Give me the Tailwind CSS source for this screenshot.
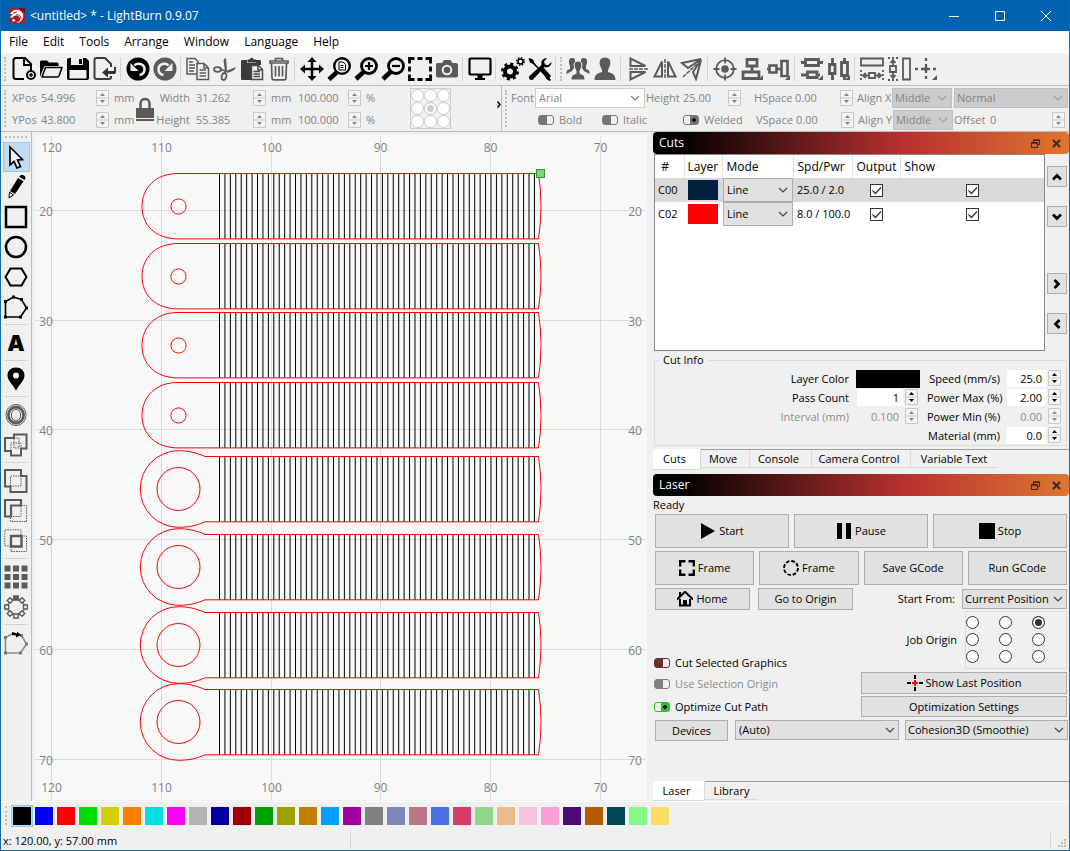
<!DOCTYPE html>
<html lang="en">
<head>
  <meta charset="UTF-8" />
  <meta name="viewport" content="width=device-width, initial-scale=1.0" />
  <title>LightBurn 0.9.07</title>
  <script src="https://cdn.jsdelivr.net/npm/@tailwindcss/browser@4"></script>
</head>
<body class="min-h-screen flex flex-col bg-[#f0f0f0] border-x border-b border-[#0f6ab4] font-['Open_Sans',sans-serif] text-[11px] leading-4 text-black">

  <!-- shared symbols -->
  <svg class="hidden">
    <symbol id="spin" viewBox="0 0 13 16">
      <path d="M.5 .5h12v15h-12zM.5 8h12" fill="#f4f4f4" stroke="#c8c8c8" />
      <path d="M6.5 3L9 6H4zM6.5 13L9 10H4z" fill="currentColor" />
    </symbol>
    <symbol id="chevron" viewBox="0 0 10 6"><path d="M1 1l4 4 4-4" fill="none" stroke="currentColor" stroke-width="1.2" /></symbol>
    <symbol id="tick" viewBox="0 0 13 13"><path d="M2.5 6.5l3 3 5.500-6" fill="none" stroke="#333" stroke-width="1.3" /></symbol>
    <symbol id="arrow" viewBox="0 0 10 10"><path d="M1 7.500L5 3.500 9 7.500" fill="none" stroke="#000" stroke-width="2.800" /></symbol>
    <symbol id="float" viewBox="0 0 9 9"><path d="M2.500 3V1h6v4.500h-2M.5 3.500h6v5h-6z" fill="none" stroke="#3a2a22" /><path d="M.5 4h6M2.500 1.300h6" stroke="#3a2a22" stroke-width="1.500" /></symbol>
    <symbol id="close" viewBox="0 0 9 9"><path d="M1 1l7 7M8 1L1 8" stroke="#3a2a22" stroke-width="2" /></symbol>
  </svg>

  <!-- title bar -->
  <header class="h-[31px] flex items-center bg-[#0063b1] text-white text-xs pl-2">
    <svg class="size-4 mr-[5px]" viewBox="0 0 16 16">
      <rect width="16" height="16" fill="#a8202c" />
      <path d="M0 0h16v5L9 0z" fill="#6e1018" />
      <path d="M1 6C3 3 6 1 9 2c4 1 6 4 5 8-1 3-4 5-7 5 3-1 5-3 4-5-1-3-4-3-6-2L3 10 1 9l3-3z" fill="#fff" />
      <path d="M4 5l4-1M7 7c3-1 5 1 5 4" stroke="#a8202c" fill="none" />
      <path d="M3 11l4 1-3 2z" fill="#fff" />
    </svg>
    <span class="flex-1">&lt;untitled&gt; * - LightBurn 0.9.07</span>
    <button class="w-[46px] h-full grid place-items-center" aria-label="Minimize"><svg class="size-[10px]"><path d="M0 5.500h10" stroke="#fff" /></svg></button>
    <button class="w-[46px] h-full grid place-items-center" aria-label="Maximize"><svg class="size-[10px]"><path d="M.5 .5h9v9h-9z" fill="none" stroke="#fff" /></svg></button>
    <button class="w-[46px] h-full grid place-items-center" aria-label="Close"><svg class="size-[10px]"><path d="M0 0l10 10M10 0L0 10" stroke="#fff" /></svg></button>
  </header>

  <!-- menu -->
  <nav class="h-[22px] flex items-center gap-[15px] bg-white text-xs pl-2">
    <a href="#">File</a><a href="#">Edit</a><a href="#">Tools</a><a href="#">Arrange</a><a href="#">Window</a><a href="#">Language</a><a href="#">Help</a>
  </nav>

  <!-- main toolbar -->
  <div class="h-[33px] flex items-stretch border-b border-[#bcbcbc] [&_button]:w-[27px] [&_button]:grid [&_button]:place-items-center [&_button_svg]:size-6 [&_i]:w-px [&_i]:bg-[#d4d4d4] [&_i]:my-1 [&_i]:ml-[2px] [&_i]:mr-[3px]">
    <span class="w-[3px] ml-[3px] mr-[3px] my-1 border-l-2 border-dotted border-[#bdbdbd]"></span>
    <button aria-label="New"><svg viewBox="0 0 24 24" fill="none" stroke="#000" stroke-width="2"><path d="M12 22H4c-1.500 0-2.500-1-2.500-2.500v-16C1.500 2 2.500 1 4 1h9l6 6v6M12 1.500V8h6" /><circle cx="19" cy="18" r="4" /><path d="M19 16v4M17 18h4" stroke-width="1.500" /></svg></button>
    <button aria-label="Open"><svg viewBox="0 0 24 24"><path d="M1 20V5c0-1 .5-1.500 1.500-1.500H8l2 2h8c1 0 1.500.5 1.500 1.500v2H7C5.500 9 5 9.500 4.500 11z" /><path d="M3 20L6.500 10.500h16.500L20 19c-.3.700-.8 1-1.500 1z" fill="#f0f0f0" stroke="#000" stroke-width="1.600" stroke-linejoin="round" /></svg></button>
    <button aria-label="Save"><svg viewBox="0 0 24 24"><path d="M1 3c0-1.300.7-2 2-2h17l3 3v17c0 1.300-.7 2-2 2H3c-1.300 0-2-.7-2-2z" /><path d="M5 1h12v7H5zM3.500 13h17v8.500h-17z" fill="#f0f0f0" /><path d="M13 2h3v5h-3z" /></svg></button>
    <button aria-label="Export"><svg viewBox="0 0 24 24" fill="none" stroke="#3c3c3c" stroke-width="2"><path d="M18 10V7l-6-6H3.500C2.500 1 1.500 2 1.500 3v17c0 1 1 2 2 2H16c1 0 2-.5 2-2v-1" /><path d="M9 15.500l6-5v3.500h6v-4h2v5c0 1.500-.8 2-2 2h-6v3.500z" fill="#333" stroke="none" /></svg></button>
    <i></i>
    <button aria-label="Undo"><svg viewBox="0 0 24 24"><circle cx="12" cy="12" r="11.500" /><path d="M8.500 8.500C11 5.500 18.500 6 18.500 12.500c0 3-2 5-5 5.500" fill="none" stroke="#f0f0f0" stroke-width="2.500" /><path d="M4.500 6v8h8z" fill="#f0f0f0" /></svg></button>
    <button aria-label="Redo"><svg viewBox="0 0 24 24"><circle cx="12" cy="12" r="11.500" fill="#5a5a5a" /><path d="M15.500 8.500C13 5.500 5.500 6 5.500 12.500c0 3 2 5 5 5.500" fill="none" stroke="#f0f0f0" stroke-width="2.500" /><path d="M19.500 6v8h-8z" fill="#f0f0f0" /></svg></button>
    <i></i>
    <button aria-label="Copy"><svg viewBox="0 0 24 24" fill="#f0f0f0" stroke="#5a5a5a" stroke-width="1.500"><path d="M1 1.500h8l3 3V17H1z" /><path d="M3 5h4M3 8h6M3 11h6M3 14h5" /><path d="M11 6.500h7l4.500 4.500v11.500H11zM18 7v4h4" /><path d="M13.500 13h6.500M13.500 16h6.500M13.500 19h6.500" /></svg></button>
    <button aria-label="Cut"><svg viewBox="0 0 24 24" fill="none" stroke="#5a5a5a" stroke-width="1.800"><ellipse cx="4.500" cy="12.500" rx="3.500" ry="2.300" /><ellipse cx="11" cy="19.500" rx="2.300" ry="3.500" transform="rotate(15 11 19.500)" /><path d="M8 12.500l4.500 1.500-1 2.500" /><path d="M12 14L10.500 3.500C11 1.500 13 1 13 1l1 12zM13 14l10-4c-1 3-3 4-9 6z" fill="#5a5a5a" stroke="none" /></svg></button>
    <button aria-label="Paste"><svg viewBox="0 0 24 24"><path d="M1 4.500C1 3.500 1.500 3 2.500 3H7v3h9V3h3.500c1 0 1.500.5 1.500 1.500V8H11v15H2.500C1.500 23 1 22.500 1 21.500z" fill="#3a3a3a" /><path d="M7.500 5.500v-3H10c0-2.500 3.500-2.500 3.500 0h2.500v3z" fill="#3a3a3a" /><path d="M11.500 8.500h7l4 4v10h-11zM18 9v4h4" fill="#f0f0f0" stroke="#4a4a4a" stroke-width="1.500" /><path d="M13.500 14.500h6.500M13.500 17h6.500M13.500 19.500h6.500" stroke="#4a4a4a" stroke-width="1.500" /></svg></button>
    <button aria-label="Delete"><svg viewBox="0 0 24 24" fill="none" stroke="#5a5a5a" stroke-width="1.700"><path d="M3.500 6h17M3 4h18v2H3zM8.500 4V1.500h7V4M4.500 6l.5 15c0 1 .8 1.800 2 1.800h10c1.200 0 2-.8 2-1.800l.5-15M8.500 9v10.500M12 9v10.500M15.500 9v10.500" /></svg></button>
    <i></i>
    <button aria-label="Pan"><svg viewBox="0 0 24 24"><path d="M12 2v20M2 12h20" stroke="#000" stroke-width="2.500" /><path d="M12 0l4.500 5h-9zM12 24l4.500-5h-9zM0 12l5-4.500v9zM24 12l-5-4.500v9z" /></svg></button>
    <button aria-label="Zoom to page"><svg viewBox="0 0 24 24" fill="none" stroke="#000"><circle cx="15" cy="9" r="7.800" stroke-width="2.400" /><path d="M9.500 15.500L2 22.500" stroke-width="4.500" /><path d="M12 5h4l2.500 2.500V13H12zM13.500 8.500h3M13.500 10.500h3" /></svg></button>
    <button aria-label="Zoom in"><svg viewBox="0 0 24 24" fill="none" stroke="#000"><circle cx="15" cy="9" r="7.500" stroke-width="2.800" /><path d="M9.500 15L2 22" stroke-width="4.500" /><path d="M11 9h8M15 5v8" stroke-width="2.200" /></svg></button>
    <button aria-label="Zoom out"><svg viewBox="0 0 24 24" fill="none" stroke="#000"><circle cx="15" cy="9" r="7.500" stroke-width="2.800" /><path d="M9.500 15L2 22" stroke-width="4.500" /><path d="M11 9h8" stroke-width="2.200" /></svg></button>
    <button aria-label="Frame selection"><svg viewBox="0 0 24 24" fill="none" stroke="#000" stroke-width="2.800"><path d="M1.500 6.500V1.500H6.500M9.500 1.500h5M17.500 1.500h5V6.500M22.500 9.500v5M22.500 17.500v5H17.500M14.500 22.500h-5M6.500 22.500H1.500V17.500M1.500 14.500v-5" /></svg></button>
    <button aria-label="Camera"><svg viewBox="0 0 24 24"><path d="M1 8c0-1.500.7-2 2-2h4l2-3h6.500l2 3H21c1.300 0 2 .7 2 2v10.500c0 1.300-.7 2-2 2H3c-1.300 0-2-.7-2-2z" fill="#5a5a5a" /><circle cx="12" cy="13" r="4.300" fill="#5a5a5a" stroke="#f0f0f0" stroke-width="2" /></svg></button>
    <i></i>
    <button aria-label="Preview"><svg viewBox="0 0 24 24"><path d="M2.500 1.500h19c.6 0 1 .4 1 1v14c0 .6-.4 1-1 1h-19c-.6 0-1-.4-1-1v-14c0-.6.4-1 1-1z" fill="none" stroke="#000" stroke-width="2.200" /><path d="M9.500 18h5v3h2.500v2H7v-2h2.500z" /></svg></button>
    <i></i>
    <button aria-label="Settings"><svg viewBox="0 0 24 24" fill="none" stroke="#000"><circle cx="9" cy="14.500" r="5" stroke-width="4" /><circle cx="9" cy="14.500" r="7.500" stroke-width="3" stroke-dasharray="2.950" /><circle cx="19.500" cy="4.500" r="2.500" stroke-width="1.500" /><circle cx="19.500" cy="4.500" r="3.800" stroke-width="1.400" stroke-dasharray="1.490" /></svg></button>
    <button aria-label="Device settings"><svg viewBox="0 0 24 24"><path d="M1.500 1L5 2.500 6.500 6 18 18.500l3 1.500 2 3-1.500 1-3-2-1.500-3L5 7 2 5.500.5 2z" /><path d="M13 13l3-2 7 8-3.500 4z" /><path d="M23.500 5c0 4-3.500 6-7 5L5.500 22c-1 1.300-2.700 1.300-3.800.2s-1-2.700.3-3.700L13.500 8c-1-4 1.500-7 5.500-7l-3 3.500 1 3 3 .8z" /></svg></button>
    <i></i>
    <span class="w-[3px] ml-px mr-px my-1 border-l-2 border-dotted border-[#bdbdbd]"></span>
    <button aria-label="Group"><svg viewBox="0 0 24 24" fill="#5a5a5a"><path d="M6 1c3 0 3.500 2 3 4.500L8 9v2l-2 3-5.500 3c0-3 0-4 3.500-5V9C2.500 6 2 1 6 1zM18 1c-3 0-3.500 2-3 4.500L16 9v2l2 3 5.500 3c0-3 0-4-3.500-5V9c1.500-3 2-8-2-8z" /><path d="M12 4c3.500 0 4.500 3 3.500 6.500L14 14v2.500c3 1 5 1.500 5 6.500H5c0-5 2-5.500 5-6.500V14l-1.500-3.500C7.500 7 8.500 4 12 4z" stroke="#f0f0f0" /></svg></button>
    <button aria-label="Ungroup"><svg viewBox="0 0 24 24" fill="#5a5a5a"><path d="M12 .5c5 0 6 4 5 8l-2 4.500v2c4 1.500 7.500 2 7.500 8h-21c0-6 3.500-6.500 7.500-8v-2L7 8.500c-1-4 0-8 5-8z" /></svg></button>
    <i></i>
    <button aria-label="Flip vertical"><svg viewBox="0 0 24 24" fill="none" stroke="#5a5a5a" stroke-width="2"><path d="M4.500 1.500v7.500h15zM4.500 22.500V15h15z" /><path d="M3 12h19" stroke-width="1.500" stroke-dasharray="4 1" /></svg></button>
    <button aria-label="Flip horizontal"><svg viewBox="0 0 24 24" fill="none" stroke="#5a5a5a" stroke-width="2"><path d="M1.500 19.500H9v-15zM22.500 19.500H15v-15z" /><path d="M12 2v20" stroke-width="1.500" stroke-dasharray="4 1" /></svg></button>
    <button aria-label="Mirror across line"><svg viewBox="0 0 24 24" fill="none" stroke="#5a5a5a" stroke-width="2"><path d="M2 6l19-4L8 11zM16 22l5-19-8 12z" /><path d="M3 20L20 4" stroke-width="1.500" stroke-dasharray="4 1" /></svg></button>
    <i></i>
    <button aria-label="Center"><svg viewBox="0 0 24 24" fill="none" stroke="#5a5a5a" stroke-width="1.800"><circle cx="12" cy="12" r="8.800" /><path d="M12 .5v6M12 17.500v6M.5 12h6M17.500 12h6" /><circle cx="12" cy="12" r="3.800" fill="#5a5a5a" stroke="none" /></svg></button>
    <button aria-label="Align vertical"><svg viewBox="0 0 24 24" fill="none" stroke="#5a5a5a" stroke-width="2.800"><path d="M7 2.500h10v6.500H7zM3 15h16v6.500H3zM12 9v6" /><path d="M23 18v5h-5z" fill="#5a5a5a" stroke="none" /></svg></button>
    <button aria-label="Align horizontal"><svg viewBox="0 0 24 24" fill="none" stroke="#5a5a5a" stroke-width="2.600"><path d="M2.500 8.500h7v7h-7zM14.500 4h6v15h-6zM0 12h2.500M9.500 12h5" /><path d="M23 18v5h-5z" fill="#5a5a5a" stroke="none" /></svg></button>
    <i></i>
    <button aria-label="Distribute vertical"><svg viewBox="0 0 24 24" fill="none" stroke="#5a5a5a" stroke-width="2.800"><path d="M5.500 2.500h13v6h-13zM7.500 15h9.500v5.500H7.500zM1 5.500h4.500M18.500 5.500H23M1 18h6.500M17 18h3" /><path d="M23 18v5h-5z" fill="#5a5a5a" stroke="none" /></svg></button>
    <button aria-label="Distribute horizontal"><svg viewBox="0 0 24 24" fill="none" stroke="#5a5a5a" stroke-width="2.800"><path d="M2.500 7.500h5.500v9H2.500zM14.500 5.500h6v13h-6zM5.500 1v6.500M5.500 16.500V23M17.500 1v4.500M17.500 18.500V23" /><path d="M23 18v5h-5z" fill="#5a5a5a" stroke="none" /></svg></button>
    <i></i>
    <button aria-label="Move together horizontal"><svg viewBox="0 0 24 24" fill="none" stroke="#5a5a5a" stroke-width="1.800"><path d="M1 1.500h22v7H1z" /><path d="M1 13v10M23 13v10" stroke-dasharray="2 2" /><path d="M9 16h6v5H9zM3 18.500h6M15 18.500h6M6 16l-3 2.500L6 21M18 16l3 2.500-3 2.500" /></svg></button>
    <button aria-label="Move together vertical"><svg viewBox="0 0 24 24" fill="none" stroke="#5a5a5a" stroke-width="1.800"><path d="M16 1.500h7v21h-7z" /><path d="M1 1h10M1 23h10" stroke-dasharray="2 2" /><path d="M3 9h6v6H3zM6 3v6M6 15v6M3.500 6L6 3l2.500 3M3.500 18L6 21l2.500-3" /></svg></button>
    <button aria-label="Move to position"><svg viewBox="0 0 24 24" fill="none" stroke="#5a5a5a" stroke-width="2"><path d="M12 1v3M12 7v9M12 19v3M1 12h3M7 12h9M19 12h3" stroke-width="2.300" /><path d="M23 18v5h-5z" fill="#5a5a5a" stroke="none" /></svg></button>
  </div>

  <!-- numeric edits + text options -->
  <div class="h-[46px] flex border-b border-[#bcbcbc] text-[#838383] [&_input]:min-w-0 [&_svg.spin]:w-[13px] [&_svg.spin]:h-4 [&_svg.spin]:shrink-0">
    <span class="w-[3px] ml-[3px] mr-[5px] my-1 shrink-0 border-l-2 border-dotted border-[#bdbdbd]"></span>
    <div class="w-[490px] shrink-0 flex border-r border-[#bcbcbc]">
      <div class="grid grid-cols-[29px_55px_18px_20px] grid-rows-[22px_22px] items-center pt-px">
        <label for="xpos">XPos</label><input id="xpos" value="54.996" /><svg class="spin"><use href="#spin" /></svg><span>mm</span>
        <label for="ypos">YPos</label><input id="ypos" value="43.800" /><svg class="spin"><use href="#spin" /></svg><span>mm</span>
      </div>
      <button class="w-[22px] grid place-items-center" aria-label="Lock aspect ratio">
        <svg class="w-[18px] h-6" viewBox="0 0 18 24" fill="#5a5a5a"><path d="M4.500 11V6.500c0-6 9-6 9 0V11" fill="none" stroke="#5a5a5a" stroke-width="2.500" /><path d="M0 11h18v10H0zM0 22h18v2H0z" /></svg>
      </button>
      <div class="grid grid-cols-[34px_6px_57px_18px_27px_50px_18px_12px] grid-rows-[22px_22px] items-center pt-px">
        <label for="wid" class="text-right">Width</label><span></span><input id="wid" value="31.262" /><svg class="spin"><use href="#spin" /></svg><span>mm</span><input aria-label="Width percent" value="100.000" /><svg class="spin"><use href="#spin" /></svg><span>%</span>
        <label for="hei" class="text-right">Height</label><span></span><input id="hei" value="55.385" /><svg class="spin"><use href="#spin" /></svg><span>mm</span><input aria-label="Height percent" value="100.000" /><svg class="spin"><use href="#spin" /></svg><span>%</span>
      </div>
      <fieldset class="ml-8 mt-0.5 size-[41px] grid grid-cols-3 place-items-center border border-[#ccc] [&_input]:size-[13px] [&_input]:appearance-none [&_input]:rounded-full [&_input]:border [&_input]:border-[#ccc] [&_input]:bg-white [&_input:checked]:bg-[#ccc] [&_input:checked]:shadow-[inset_0_0_0_2px_white]">
        <input type="radio" name="anchor" aria-label="Top left" /><input type="radio" name="anchor" aria-label="Top" /><input type="radio" name="anchor" aria-label="Top right" />
        <input type="radio" name="anchor" aria-label="Left" /><input type="radio" name="anchor" aria-label="Center" checked /><input type="radio" name="anchor" aria-label="Right" />
        <input type="radio" name="anchor" aria-label="Bottom left" /><input type="radio" name="anchor" aria-label="Bottom" /><input type="radio" name="anchor" aria-label="Bottom right" />
      </fieldset>
      <button class="ml-auto mb-2" aria-label="More"><svg class="w-[4px] h-[7px]"><path d="M.5 .5l2.500 3-2.500 3" fill="none" stroke="#000" stroke-width="1.500" /></svg></button>
    </div>
    <span class="w-[3px] ml-[3px] mr-[3px] my-1 shrink-0 border-l-2 border-dotted border-[#bdbdbd]"></span>

    <div class="flex-1 min-w-0 flex flex-col">
      <div class="h-[23px] pt-px flex items-center">
        <label for="font" class="w-[24px]">Font</label>
        <div class="w-[110px] h-5 grid items-center border border-[#ccc] bg-white"><select id="font" class="[grid-area:1/1] appearance-none px-[3px]"><option>Arial</option></select><svg class="[grid-area:1/1] justify-self-end mr-1 w-[10px] h-[6px] pointer-events-none"><use href="#chevron" /></svg></div>
        <label for="fh" class="w-[38px] pl-px">Height</label><input id="fh" class="w-[45px]" value="25.00" /><svg class="spin"><use href="#spin" /></svg>
        <label for="hs" class="w-[41px] ml-[13px]">HSpace</label><input id="hs" class="w-[45px]" value="0.00" /><svg class="spin"><use href="#spin" /></svg>
        <label for="ax" class="w-[35px] ml-1 whitespace-nowrap">Align X</label>
        <div class="w-[60px] h-5 grid items-center border border-[#bfbfbf] bg-[#ccc]"><select id="ax" class="[grid-area:1/1] appearance-none px-[2px]"><option>Middle</option></select><svg class="[grid-area:1/1] justify-self-end mr-1 w-[10px] h-[6px] pointer-events-none text-[#a0a0a0]"><use href="#chevron" /></svg></div>
        <div class="flex-1 min-w-0 ml-[2px] mr-px h-5 grid items-center border border-[#bfbfbf] bg-[#ccc]"><select aria-label="Text mode" class="[grid-area:1/1] appearance-none px-[2px]"><option>Normal</option></select><svg class="[grid-area:1/1] justify-self-end mr-1 w-[10px] h-[6px] pointer-events-none text-[#a0a0a0]"><use href="#chevron" /></svg></div>
      </div>
      <div class="h-[22px] flex items-center">
        <label class="flex items-center gap-[5px] ml-[27px] w-[64px]"><input type="checkbox" class="appearance-none w-4 h-[10px] rounded-[3px] border border-[#777] bg-[linear-gradient(90deg,#777_55%,#f0f0f0_55%)]" />Bold</label>
        <label class="flex items-center gap-[5px] w-[81px]"><input type="checkbox" class="appearance-none w-4 h-[10px] rounded-[3px] border border-[#777] bg-[linear-gradient(90deg,#777_55%,#f0f0f0_55%)]" />Italic</label>
        <label class="flex items-center gap-[5px] w-[73px]"><input type="checkbox" checked class="appearance-none w-4 h-[10px] rounded-[3px] border border-[#777] bg-[radial-gradient(circle_at_10px_4px,#000_2px,transparent_2px),linear-gradient(90deg,#f0f0f0_40%,#777_40%)]" />Welded</label>
        <label for="vs" class="w-[40px]">VSpace</label><input id="vs" class="w-[45px]" value="0.00" /><svg class="spin"><use href="#spin" /></svg>
        <label for="ay" class="w-[35px] ml-1 whitespace-nowrap">Align Y</label>
        <div class="w-[60px] h-5 grid items-center border border-[#bfbfbf] bg-[#ccc]"><select id="ay" class="[grid-area:1/1] appearance-none px-[2px]"><option>Middle</option></select><svg class="[grid-area:1/1] justify-self-end mr-1 w-[10px] h-[6px] pointer-events-none text-[#a0a0a0]"><use href="#chevron" /></svg></div>
        <label for="off" class="w-[36px] ml-px">Offset</label><input id="off" class="flex-1" value="0" /><svg class="spin mr-1"><use href="#spin" /></svg>
      </div>
    </div>
  </div>

  <main class="flex-1 flex">
    <!-- creation tools -->
    <div class="w-[31px] flex flex-col items-center border-r border-[#bcbcbc] [&_button]:w-[27px] [&_button]:h-[30px] [&_button]:grid [&_button]:place-items-center [&_button_svg]:size-6 [&_i]:h-px [&_i]:w-[22px] [&_i]:bg-[#d0d0d0] [&_i]:mt-[2px] [&_i]:mb-[3px]">
      <span class="w-[22px] mt-[4px] mb-[4px] border-t-2 border-dotted border-[#bdbdbd]"></span>
      <button aria-label="Select" class="bg-[#c0dcf3] border border-[#90c8f6]"><svg viewBox="0 0 24 24"><path d="M6 2l12.500 12.500-5 .5 3 6.500-3.500 1.500-3-6.500L6 20z" fill="#e8f2fb" stroke="#000" stroke-width="1.700" /></svg></button>
      <button aria-label="Draw lines"><svg viewBox="0 0 24 24"><path d="M15 1.500l2-1.500c2-.5 4.500 1 4.500 3L20.500 5zM14 3l5.500 3.300L11 19l-5-3z" /><path d="M5.500 17l4 3-4.500 3z" fill="none" stroke="#000" /></svg></button>
      <button aria-label="Rectangle"><svg viewBox="0 0 24 24"><path d="M2 2h20v20H2z" fill="none" stroke="#000" stroke-width="2.500" /></svg></button>
      <button aria-label="Ellipse"><svg viewBox="0 0 24 24"><circle cx="12" cy="12" r="10" fill="none" stroke="#000" stroke-width="2.500" /></svg></button>
      <button aria-label="Polygon"><svg viewBox="0 0 24 24"><path d="M1.500 12L6.500 3.500h11l5 8.500-5 8.500h-11z" fill="none" stroke="#000" stroke-width="2" /></svg></button>
      <button aria-label="Edit nodes"><svg viewBox="0 0 24 24"><path d="M1.500 22V6.500L9.500 2l8 2.500 5 8.500-6 9z" fill="none" stroke="#000" stroke-width="1.600" /><path d="M0 5h3v3H0zM8 .5h3v3H8zM16 3h3v3h-3zM21 11.500h3v3h-3zM15 20.500h3v3h-3zM0 20.500h3v3H0z" /></svg></button>
      <i></i>
      <button aria-label="Text" class="text-[22px] leading-6 font-black font-[Inter,sans-serif]">A</button>
      <i></i>
      <button aria-label="Position laser"><svg viewBox="0 0 24 24"><path d="M12 .5c5 0 8.500 3.500 8.500 8 0 5-5 8.500-8.500 15-3.500-6.500-8.500-10-8.500-15 0-4.500 3.500-8 8.500-8z" /><circle cx="12" cy="8.500" r="3" fill="#f0f0f0" /></svg></button>
      <i></i>
      <button aria-label="Offset shapes"><svg viewBox="0 0 24 24" fill="none" stroke="#5a5a5a"><rect x="2" y="1.500" width="20" height="21" rx="10" /><rect x="4.500" y="4" width="15" height="16" rx="7.500" stroke-width="2.800" /><rect x="7.500" y="6.500" width="9" height="11" rx="4.500" /></svg></button>
      <button aria-label="Weld"><svg viewBox="0 0 24 24" fill="none" stroke="#5a5a5a" stroke-width="2"><path d="M10 5V1.500h12.500v14H17v7H7v-4.500H1V5z" /><path d="M7 18V10h10v6M10 5h5v10h-5z" stroke-width="1" stroke-dasharray="1.500 1" /></svg></button>
      <i></i>
      <button aria-label="Union"><svg viewBox="0 0 24 24" fill="none" stroke="#5a5a5a" stroke-width="2"><path d="M1 1h16v6h5.500v16h-16v-5.500H1z" /><path d="M6.500 17V7H17v10H6.500" stroke-width="1" stroke-dasharray="1.500 1" /></svg></button>
      <button aria-label="Subtract"><svg viewBox="0 0 24 24" fill="none" stroke="#5a5a5a" stroke-width="2.200"><path d="M1 1h16v5.500H7V17.500H1z" /><path d="M17 6.500h5.500v16h-16V17.500H17z" stroke-width="1" stroke-dasharray="1.500 1" /></svg></button>
      <button aria-label="Intersection"><svg viewBox="0 0 24 24" fill="none" stroke="#5a5a5a"><path d="M7 7h10.500v10.500H7z" stroke-width="2.400" /><path d="M7 17H.8V.8H17V7M17 7h5.500v15.500H7V17" stroke-dasharray="1.500 1" /></svg></button>
      <i></i>
      <button aria-label="Grid array"><svg viewBox="0 0 24 24" fill="#5a5a5a"><path d="M.5 .5h6v6h-6zM9 .5h6v6H9zM17.500 .5h6v6h-6zM.5 9h6v6h-6zM9 9h6v6H9zM17.500 9h6v6h-6zM.5 17.500h6v6h-6zM9 17.500h6v6H9zM17.500 17.500h6v6h-6z" /></svg></button>
      <button aria-label="Circular array"><svg viewBox="0 0 24 24" fill="#f0f0f0" stroke="#5a5a5a" stroke-width="1.400"><circle cx="12" cy="12" r="8.500" fill="none" stroke-width="1" /><path d="M9.800 1h4.400v4H9.800z" fill="#5a5a5a" /><path d="M19.500 10h4v4h-4zM.7 10h4v4h-4zM9.800 19h4.400v4H9.800zM18 2.700l2.800 2.800L18 8.300l-2.800-2.800zM6 2.700l2.800 2.800L6 8.300 3.200 5.500zM18 15.700l2.800 2.800-2.800 2.800-2.800-2.800zM6 15.700l2.800 2.800L6 21.300l-2.800-2.800z" /></svg></button>
      <i></i>
      <button aria-label="Start point"><svg viewBox="0 0 24 24"><path d="M1.500 22V6.500L9.500 2l8 2.500 5 8.500-6 9z" fill="none" stroke="#8a8a8a" stroke-width="1.600" /><path d="M0 5h3v3H0zM16 3h3v3h-3zM21 11.500h3v3h-3zM15 20.500h3v3h-3zM0 20.500h3v3H0z" fill="#777" /><path d="M8 1l5 1.500V.5L17 4l-5 2.500v-2L8 4z" /></svg></button>
    </div>

    <!-- workspace -->
    <div class="flex-1 min-w-0">
      <svg id="workspace" class="w-full" viewBox="32 132 620 669" font-size="12" fill="none">
        <rect x="35" y="135" width="612" height="665" fill="#f8f8f8" />
      </svg>
    </div>

    <aside class="w-[417px] pl-px flex flex-col">
      <!-- cuts panel -->
      <div class="h-[22px] shrink-0 flex items-center pl-1.5 pr-2 rounded bg-[linear-gradient(90deg,#000_6%,#b83030_60%,#de7530)] text-white">
        <h2 class="flex-1 text-xs">Cuts</h2>
        <button class="mr-3" aria-label="Float"><svg class="size-[9px]"><use href="#float" /></svg></button>
        <button aria-label="Close"><svg class="size-[9px]"><use href="#close" /></svg></button>
      </div>
      <div class="flex">
        <div class="flex-1 ml-px h-[197px] border border-[#828790] bg-white">
          <table class="w-full table-fixed text-left [&_th]:font-normal [&_td]:p-0 [&_th]:p-0 [&_th]:text-xs">
            <colgroup><col class="w-[29px]" /><col class="w-[38px]" /><col class="w-[71px]" /><col class="w-[59px]" /><col class="w-[48px]" /><col /></colgroup>
            <thead>
              <tr class="h-[23px] [&>th+th]:border-l [&>th]:border-[#e5e5e5]">
                <th class="text-center! pr-2!">#</th><th class="pl-[3px]!">Layer</th><th class="pl-1!">Mode</th><th class="pl-1!">Spd/Pwr</th><th class="pl-1!">Output</th><th class="pl-1!">Show</th>
              </tr>
            </thead>
            <tbody>
              <tr class="h-6 bg-[#d9d9d9]">
                <td class="pl-[3px]!">C00</td>
                <td><div class="ml-1 w-[30px] h-5 bg-[#002240]"></div></td>
                <td><div class="h-6 ml-px grid items-center border border-[#adadad] bg-[#e1e1e1]"><select aria-label="Mode C00" class="[grid-area:1/1] appearance-none px-[3px]"><option>Line</option></select><svg class="[grid-area:1/1] justify-self-end mr-1 w-[10px] h-[6px] pointer-events-none text-[#444]"><use href="#chevron" /></svg></div></td>
                <td class="pl-1! whitespace-nowrap">25.0 / 2.0</td>
                <td><span class="grid place-items-center"><input type="checkbox" checked aria-label="Output C00" class="[grid-area:1/1] appearance-none size-[13px] border border-[#333] bg-white" /><svg class="[grid-area:1/1] size-[13px] pointer-events-none"><use href="#tick" /></svg></span></td>
                <td><span class="grid place-items-center"><input type="checkbox" checked aria-label="Show C00" class="[grid-area:1/1] appearance-none size-[13px] border border-[#333] bg-white" /><svg class="[grid-area:1/1] size-[13px] pointer-events-none"><use href="#tick" /></svg></span></td>
              </tr>
              <tr class="h-6">
                <td class="pl-[3px]!">C02</td>
                <td><div class="ml-1 w-[30px] h-5 bg-[#ff0000]"></div></td>
                <td><div class="h-6 ml-px grid items-center border border-[#adadad] bg-[#e1e1e1]"><select aria-label="Mode C02" class="[grid-area:1/1] appearance-none px-[3px]"><option>Line</option></select><svg class="[grid-area:1/1] justify-self-end mr-1 w-[10px] h-[6px] pointer-events-none text-[#444]"><use href="#chevron" /></svg></div></td>
                <td class="pl-1! whitespace-nowrap">8.0 / 100.0</td>
                <td><span class="grid place-items-center"><input type="checkbox" checked aria-label="Output C02" class="[grid-area:1/1] appearance-none size-[13px] border border-[#333] bg-white" /><svg class="[grid-area:1/1] size-[13px] pointer-events-none"><use href="#tick" /></svg></span></td>
                <td><span class="grid place-items-center"><input type="checkbox" checked aria-label="Show C02" class="[grid-area:1/1] appearance-none size-[13px] border border-[#333] bg-white" /><svg class="[grid-area:1/1] size-[13px] pointer-events-none"><use href="#tick" /></svg></span></td>
              </tr>
            </tbody>
          </table>
        </div>
        <div class="w-[24px] flex flex-col items-center pt-3 [&>button]:w-5 [&>button]:h-[21px] [&>button]:grid [&>button]:place-items-center [&>button]:border [&>button]:border-[#adadad] [&>button]:bg-[#e1e1e1] [&_svg]:size-[10px]">
          <button aria-label="Move up"><svg><use href="#arrow" /></svg></button>
          <button class="mt-[19px]" aria-label="Move down"><svg class="rotate-180"><use href="#arrow" /></svg></button>
          <button class="mt-[46px]" aria-label="Next"><svg class="rotate-90"><use href="#arrow" /></svg></button>
          <button class="mt-[19px]" aria-label="Previous"><svg class="-rotate-90"><use href="#arrow" /></svg></button>
        </div>
      </div>

      <fieldset class="mt-px ml-px mr-0.5 h-[94px] border border-[#dcdcdc]">
        <legend class="ml-1 px-1">Cut Info</legend>
        <div class="grid grid-cols-[1fr_64px_73px_54px] gap-x-[7px] auto-rows-[19px] items-center pt-px pr-[5px] [&>label]:text-right [&>label]:whitespace-nowrap [&_input]:w-[39px] [&_input]:h-[17px] [&_input]:text-right [&_input]:pr-1 [&_svg]:w-[13px] [&_svg]:h-4">
          <label for="lc">Layer Color</label><button id="lc" class="h-[18px] bg-black" aria-label="Layer Color"></button>
          <label for="sp">Speed (mm/s)</label><div class="flex gap-0.5"><input id="sp" class="bg-white" value="25.0" /><svg><use href="#spin" /></svg></div>
          <label for="pc">Pass Count</label><div class="flex gap-0.5 pl-px"><input id="pc" class="flex-1 bg-white" value="1" /><svg class="mr-[2px]"><use href="#spin" /></svg></div>
          <label for="pm">Power Max (%)</label><div class="flex gap-0.5"><input id="pm" class="bg-white" value="2.00" /><svg><use href="#spin" /></svg></div>
          <label for="iv" class="text-[#8c8c8c]">Interval (mm)</label><div class="flex gap-0.5 pl-px text-[#8c8c8c]"><input id="iv" class="flex-1" value="0.100" disabled /><svg class="mr-[2px]"><use href="#spin" /></svg></div>
          <label for="pn">Power Min (%)</label><div class="flex gap-0.5 text-[#8c8c8c]"><input id="pn" value="0.00" disabled /><svg><use href="#spin" /></svg></div>
          <span></span><span></span>
          <label for="mt">Material (mm)</label><div class="flex gap-0.5"><input id="mt" class="bg-white" value="0.0" /><svg><use href="#spin" /></svg></div>
        </div>
      </fieldset>
      <div class="mt-[3px] h-[22px] flex border-t border-[#a0a0a0] [&_button]:h-[18px] [&_button]:border-r [&_button]:border-b [&_button]:border-[#d9d9d9]">
        <button class="h-[21px]! -mt-px w-[48px] pr-1 bg-white">Cuts</button>
        <button class="w-[49px] pr-1">Move</button>
        <button class="w-[62px] pr-1">Console</button>
        <button class="w-[99px] pr-1">Camera Control</button>
        <button class="w-[86px] border-r-0!">Variable Text</button>
      </div>

      <!-- laser panel -->
      <div class="mt-[3px] h-[22px] shrink-0 flex items-center pl-1.5 pr-2 rounded bg-[linear-gradient(90deg,#000_6%,#b83030_60%,#de7530)] text-white">
        <h2 class="flex-1 text-xs">Laser</h2>
        <button class="mr-3" aria-label="Float"><svg class="size-[9px]"><use href="#float" /></svg></button>
        <button aria-label="Close"><svg class="size-[9px]"><use href="#close" /></svg></button>
      </div>
      <p class="h-[18px] leading-[18px]">Ready</p>
      <div class="pl-0.5 pr-[2px] flex flex-col gap-[3px] [&_button]:flex [&_button]:items-center [&_button]:justify-center [&_button]:gap-[3px] [&_button]:border [&_button]:border-[#adadad] [&_button]:bg-[#e1e1e1]">
        <div class="h-[34px] grid grid-cols-3 gap-[5px]">
          <button><svg class="size-4"><path d="M1 0l14 8-14 8z" /></svg>Start</button>
          <button><svg class="size-4"><path d="M1 0h5v16H1zM10 0h5v16h-5z" /></svg>Pause</button>
          <button><svg class="size-4"><path d="M0 0h16v16H0z" /></svg>Stop</button>
        </div>
        <div class="h-[34px] grid grid-cols-4 gap-[5px]">
          <button><svg class="size-4" fill="none" stroke="#000" stroke-width="2.400"><path d="M1.200 6.500V1.200h5.300M9.500 1.200h5.300v5.300M14.800 9.500v5.300H9.500M6.500 14.800H1.200V9.500" /></svg>Frame</button>
          <button><svg class="size-4" fill="none" stroke="#000" stroke-width="1.900"><circle cx="8" cy="8" r="7" stroke-dasharray="3.700 1.800" /></svg>Frame</button>
          <button>Save GCode</button>
          <button>Run GCode</button>
        </div>
        <div class="flex h-[81px]">
          <div class="w-[198px] flex flex-col justify-between">
            <div class="flex gap-2 [&>button]:flex-1 [&>button]:h-[22px]">
              <button><svg class="size-4"><path d="M0 8.500L8 .8l8 7.700M3 8v6.500h10V8M3 1v5" fill="none" stroke="#000" stroke-width="2" /><path d="M6 9h4v6H6z" /></svg>Home</button>
              <button>Go to Origin</button>
            </div>
            <label class="flex items-center gap-[5px] h-[13px]"><input type="checkbox" class="-ml-px appearance-none w-4 h-[10px] rounded-[3px] border border-[#6e2c2c] bg-[linear-gradient(90deg,#6e2c2c_55%,#f0f0f0_55%)]" />Cut Selected Graphics</label>
          </div>
          <div class="flex-1 flex flex-col gap-[2px] pt-px">
            <div class="flex items-center justify-end gap-[7px]">
              <label for="sf">Start From:</label>
              <div class="w-[105px] h-5 grid items-center border border-[#adadad] bg-[#e1e1e1]"><select id="sf" class="[grid-area:1/1] appearance-none px-[2px]"><option>Current Position</option></select><svg class="[grid-area:1/1] justify-self-end mr-[3px] w-[10px] h-[6px] pointer-events-none text-[#444]"><use href="#chevron" /></svg></div>
            </div>
            <div class="flex items-center justify-end gap-2">
              <span>Job Origin</span>
              <div class="w-[102px] h-[58px] pt-1 grid grid-cols-[33px_33px_33px] auto-rows-[17px] border border-[#dcdcdc] [&_input]:size-[13px] [&_input]:appearance-none [&_input]:rounded-full [&_input]:border [&_input]:border-[#333] [&_input]:bg-white [&_input:checked]:bg-[#333] [&_input:checked]:shadow-[inset_0_0_0_2px_white]">
                <input type="radio" name="origin" aria-label="Top left" /><input type="radio" name="origin" aria-label="Top" /><input type="radio" name="origin" aria-label="Top right" checked />
                <input type="radio" name="origin" aria-label="Left" /><input type="radio" name="origin" aria-label="Center" /><input type="radio" name="origin" aria-label="Right" />
                <input type="radio" name="origin" aria-label="Bottom left" /><input type="radio" name="origin" aria-label="Bottom" /><input type="radio" name="origin" aria-label="Bottom right" />
              </div>
            </div>
          </div>
        </div>
        <div class="flex">
          <div class="w-[206px] flex flex-col gap-[7px] pt-1">
            <label class="flex items-center gap-[5px] text-[#8c8c8c]"><input type="checkbox" disabled class="-ml-px appearance-none w-4 h-[10px] rounded-[3px] border border-[#808080] bg-[linear-gradient(90deg,#808080_55%,#f0f0f0_55%)]" />Use Selection Origin</label>
            <label class="flex items-center gap-[5px]"><input type="checkbox" checked class="-ml-px appearance-none w-4 h-[10px] rounded-[3px] border border-[#22c32e] bg-[radial-gradient(circle_at_10px_4px,#000_2px,transparent_2px),linear-gradient(90deg,#f0f0f0_40%,#22c32e_40%)]" />Optimize Cut Path</label>
          </div>
          <div class="flex-1 flex flex-col gap-[2px]">
            <button class="h-[22px]"><svg class="size-4" stroke-width="2"><path d="M8 0v4M8 12v4M0 8h4M12 8h4" stroke="#000" /><path d="M8 5v6M5 8h6" stroke="#f00" /></svg>Show Last Position</button>
            <button class="h-[21px]">Optimization Settings</button>
          </div>
        </div>
        <div class="flex -mr-px">
          <button class="w-[73px] h-[21px]">Devices</button>
          <div class="ml-[7px] w-[164px] h-5 grid items-center border border-[#adadad] bg-[#e1e1e1]"><select aria-label="Port" class="[grid-area:1/1] appearance-none px-[3px]"><option>(Auto)</option></select><svg class="[grid-area:1/1] justify-self-end mr-[3px] w-[10px] h-[6px] pointer-events-none text-[#444]"><use href="#chevron" /></svg></div>
          <div class="ml-1.5 flex-1 h-5 grid items-center border border-[#adadad] bg-[#e1e1e1]"><select aria-label="Device" class="[grid-area:1/1] appearance-none px-[2px]"><option>Cohesion3D (Smoothie)</option></select><svg class="[grid-area:1/1] justify-self-end mr-[3px] w-[10px] h-[6px] pointer-events-none text-[#444]"><use href="#chevron" /></svg></div>
        </div>
      </div>
      <div class="mt-auto h-[20px] flex border-t border-[#a0a0a0] [&_button]:h-[18px] [&_button]:border-r [&_button]:border-b [&_button]:border-[#d9d9d9]">
        <button class="h-[20px]! -mt-px w-[52px] pr-1 bg-white">Laser</button>
        <button class="w-[53px] border-r-0!">Library</button>
      </div>
    </aside>
  </main>

  <!-- layer palette -->
  <div class="h-[30px] flex items-center border-t border-white pb-0.5">
    <span class="h-[19px] w-[3px] ml-1 mr-[3px] border-l-2 border-dotted border-[#bdbdbd]"></span>
    <div id="palette" class="flex"></div>
  </div>

  <footer class="h-[19px] flex items-center">
    <span class="w-[350px] pl-0.5 border-r border-[#d4d4d4]">x: 120.00, y: 57.00 mm</span>
    <span class="ml-auto h-4 border-l border-[#d4d4d4] w-[8px]"></span>
    <svg class="w-[9px] h-[9px] mb-0.5 mr-[2px] self-end" fill="#bdbdbd"><path d="M6 0h2v2H6zM3 3h2v2H3zM6 3h2v2H6zM0 6h2v2H0zM3 6h2v2H3zM6 6h2v2H6z" /></svg>
  </footer>

  <script>
    const layerColors = [
      '#000000', '#0000ff', '#ff0000', '#00e000', '#d0d000', '#ff8000', '#00e0e0', '#ff00ff', '#b4b4b4', '#0000a0',
      '#a00000', '#00a000', '#a0a000', '#c08000', '#00a0ff', '#a000a0', '#808080', '#7d87b9', '#bb7784', '#4a6fe3',
      '#d33f6a', '#8cd78c', '#f0b98d', '#f6c4e1', '#fa9ed4', '#500a78', '#b45a00', '#004754', '#86fa88', '#ffdb66'
    ];
    document.getElementById('palette').innerHTML = layerColors.map((c, i) => `
      <button aria-label="Layer ${i}" class="w-[22px] h-[22px] grid place-items-center border ${i ? 'border-transparent' : 'border-[#90c8f6] bg-[#c0dcf3]'}">
        <span class="size-[18px]" style="background:${c}"></span>
      </button>`).join('');

    // grid lines and rulers
    let out = '';
    for (let i = 0; i < 6; i++) {
      const x = 51.5 + Math.round(i * 109.8);
      const y = 210.5 + Math.round(i * 109.7);
      out += `<path d="M${x} 136V799M35 ${y}H646" stroke="#dcdcdc" />`;
      out += `<g fill="#80808a" text-anchor="middle">
        <text x="${x}" y="152">${120 - i * 10}</text><text x="${x}" y="792">${120 - i * 10}</text>
        <text x="46" y="${y + 5}">${20 + i * 10}</text><text x="635" y="${y + 5}">${20 + i * 10}</text></g>`;
    }

    function hatch(top, bottom) {
      let d = '';
      for (let i = 0; i <= 58; i++) d += `M${(219.5 + i * 5.43).toFixed(2)} ${top}V${bottom}`;
      return `<path d="${d}" stroke="#000" />`;
    }

    // straight combs with a small hole
    for (let i = 0; i < 4; i++) {
      const t = 173.5 + Math.round(i * 69.7);
      const b = t + 65.4, m = t + 33;
      out += hatch(t, b) + `<path d="M178 ${t}H538.5Q543.5 ${m} 538.5 ${b}H178C155 ${b} 142 ${m + 18} 142 ${m}S155 ${t} 178 ${t}z" stroke="#f00" />
        <circle cx="178.5" cy="${m}" r="7.6" stroke="#f00" />`;
    }
    // round head combs
    for (let i = 0; i < 4; i++) {
      const t = 456.5 + Math.round(i * 77.8);
      const b = t + 65.3, m = t + 32.5;
      out += hatch(t, b) + `<path d="M205 ${t}H538.500Q543.500 ${m} 538.500 ${b}H205C196 ${b + 4} 188 ${m + 38.3} 178.600 ${m + 38.3}A38.300 38.300 0 0 1 178.600 ${m - 38.3}C188 ${m - 38.3} 196 ${t - 4} 205 ${t}z" stroke="#f00" />
        <circle cx="178.5" cy="${m}" r="21.5" stroke="#f00" />`;
    }
    out += '<rect x="536.5" y="169.5" width="8" height="8" fill="#78d878" stroke="#3c8c3c" />';
    document.getElementById('workspace').insertAdjacentHTML('beforeend', out);
  </script>
</body>
</html>
